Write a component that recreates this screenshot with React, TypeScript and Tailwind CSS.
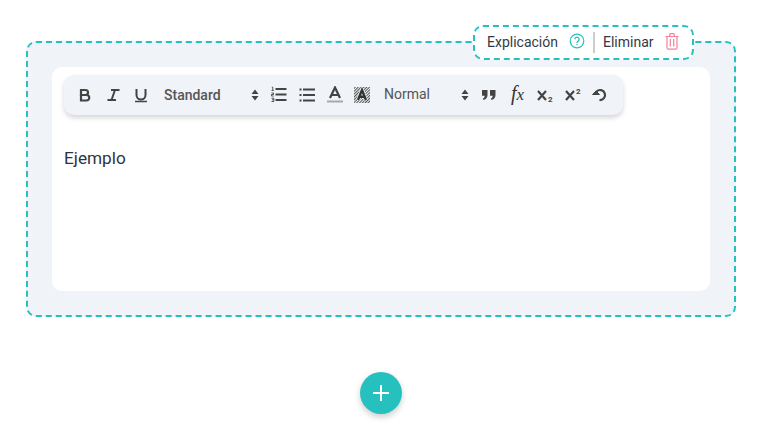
const ink = "#444444";

function Bold() {
  return (
    <svg width="18" height="18" viewBox="0 0 18 18" fill="none" stroke={ink} strokeWidth="2.200" className="shrink-0">
      <path d="M5 4h4.500a2.500 2.500 0 0 1 0 5H5z" />
      <path d="M5 9h5.500a2.750 2.750 0 0 1 0 5.500H5z" />
    </svg>
  );
}

function Italic() {
  return (
    <svg width="18" height="18" viewBox="0 0 18 18" fill="none" stroke={ink} strokeWidth="2" className="shrink-0">
      <path d="M7 4h8.500M3.500 14H12M11 4l-3.500 10" />
    </svg>
  );
}

function Underline() {
  return (
    <svg width="18" height="18" viewBox="0 0 18 18" fill="none" stroke={ink} className="shrink-0">
      <path strokeWidth="2" d="M4.500 3v6a4.500 4.500 0 0 0 9 0V3" />
      <path strokeWidth="1.500" d="M3 15.500h12" />
    </svg>
  );
}

function Chevrons() {
  return (
    <svg width="8" height="12" viewBox="0 0 8 12" fill={ink} className="shrink-0">
      <path d="M4 .5 7.500 5H.5zM4 11.500.5 7h7z" />
    </svg>
  );
}

function OrderedList() {
  return (
    <svg width="18" height="18" viewBox="0 0 18 18" fill="none" stroke={ink} className="shrink-0">
      <path strokeWidth="2" d="M4.500 3h11M4.500 8.500h11M4.500 14h11" />
      <path strokeWidth=".9" d="M.8 1.200h1v3M.5 4.500h2.300M.5 7h2v1.500h-2V10h2.300M.5 12.200h2.300v3.300H.5M1 13.800h1.800" />
    </svg>
  );
}

function BulletList() {
  return (
    <svg width="18" height="18" viewBox="0 0 18 18" fill="none" stroke={ink} strokeWidth="2" className="shrink-0">
      <path d="M4 3.500h12M4 9h12M4 14.500h12" />
      <path d="M.5 3.500h2M.5 9h2M.5 14.500h2" />
    </svg>
  );
}

function TextColor() {
  return (
    <svg width="18" height="18" viewBox="0 0 18 18" fill="none" className="shrink-0">
      <path stroke={ink} strokeWidth="2.200" d="M4 12 9 1.500 14 12M5.800 9h6.400" />
      <rect x="1" y="14.500" width="16" height="2" fill="#a8a8ae" />
    </svg>
  );
}

function Background() {
  return (
    <svg width="18" height="18" viewBox="0 0 18 18" fill="none" className="shrink-0">
      <defs>
        <pattern id="hatch" width="2" height="2" patternUnits="userSpaceOnUse" patternTransform="rotate(45)">
          <rect width="1" height="2" fill="#555555" />
        </pattern>
      </defs>
      <rect x="1" y="1" width="16" height="16" fill="url(#hatch)" />
      <path stroke="#f0f3f8" strokeWidth="4" d="M5 14 9 4l4 10" />
      <path stroke="#333333" strokeWidth="2.400" d="M5 14 9 4l4 10M6.500 10.800h5" />
    </svg>
  );
}

function Quote() {
  return (
    <svg width="16" height="18" viewBox="0 0 16 18" fill={ink} className="shrink-0">
      <path d="M1 4h5.500v5c0 2.500-1.500 4.500-4 5l-.7-1.300C3 12.200 3.700 11.300 3.700 9.800H1z" />
      <path d="M9 4h5.500v5c0 2.500-1.500 4.500-4 5l-.7-1.300c1.200-.5 1.900-1.400 1.900-2.900H9z" />
    </svg>
  );
}

function Formula() {
  return (
    <span className="w-[18px] shrink-0 text-center font-['Liberation_Serif',serif] text-[20px] leading-[18px] text-[#333333] italic">
      f<span className="text-[17px]">x</span>
    </span>
  );
}

function Script({ sup }: { sup?: boolean }) {
  return (
    <svg width="18" height="18" viewBox="0 0 18 18" fill="none" stroke={ink} className="shrink-0">
      <path strokeWidth="2.200" d="M2 5l8 9M10 5l-8 9" />
      <text x="12" y={sup ? 8 : 16} stroke="none" fill={ink} fontSize="8" fontWeight="700" fontFamily="Roboto, sans-serif">2</text>
    </svg>
  );
}

function Clean() {
  return (
    <svg width="18" height="18" viewBox="0 0 18 18" fill="none" stroke={ink} strokeWidth="2.200" className="shrink-0">
      <path d="M5.500 5.500A5 5 0 1 1 8.500 14" />
      <path fill={ink} strokeWidth="1" d="M1.500 8.500 5 5l3.500 3.500z" />
    </svg>
  );
}

function Help() {
  return (
    <svg width="16" height="16" viewBox="0 0 16 16" fill="none" stroke="#26c1bf" strokeWidth="1.200" className="shrink-0">
      <circle cx="8" cy="8" r="6.800" />
      <path strokeWidth="1.300" d="M5.900 6.300a2.100 2.100 0 1 1 3.200 1.800C8.300 8.600 8 9 8 9.900" />
      <path d="M8 11v1.200" />
    </svg>
  );
}

function Trash() {
  return (
    <svg width="14" height="17" viewBox="0 0 14 17" fill="none" stroke="#f6809b" strokeWidth="1.200" className="shrink-0">
      <path d="M.5 3.500h13M2 3.500v11.200c0 .9.500 1.500 1.300 1.500h7.400c.8 0 1.300-.6 1.300-1.500V3.500M4.800 3.500V1.200c0-.4.2-.6.600-.6h3.200c.4 0 .6.200.6.600v2.300M5.300 6v7.500M8.700 6v7.500" />
    </svg>
  );
}

export default function App() {
  return (
    <main className="h-[444px] w-[757px] overflow-hidden bg-white pt-[41px] pl-[26px] font-['Roboto',sans-serif]">
      <div className="relative h-[276px] w-[710px] rounded-[10px] border-2 border-dashed border-[#26c1bf] bg-[#f0f3f8] p-6">
        <div className="absolute top-[-18px] right-[40px] flex h-[35px] w-[221px] items-center rounded-[10px] border-2 border-dashed border-[#26c1bf] bg-white pl-[12px] text-sm text-[#333a45]">
          <span className="-mt-0.5">Explicación</span>
          <span className="ml-[11px] -mt-[3px]"><Help /></span>
          <span className="mx-[8px] -mt-px h-[21px] w-0.5 bg-[#cccccc]" />
          <span className="-mt-0.5">Eliminar</span>
          <span className="ml-[11px] -mt-[3px]"><Trash /></span>
        </div>

        <div className="h-[224px] w-[658px] rounded-[10px] bg-white px-3 pt-2">
          <div className="flex h-10 w-[559px] items-center rounded-[10px] bg-[#f0f3f8] pl-3 shadow-[0_3px_5px_rgba(0,0,0,0.16)]">
            <Bold />
            <span className="ml-[10px]"><Italic /></span>
            <span className="ml-[10px]"><Underline /></span>
            <span className="ml-[14px] w-[87px] text-sm font-medium text-[#555555]">Standard</span>
            <Chevrons />
            <span className="ml-[12px]"><OrderedList /></span>
            <span className="ml-[10px]"><BulletList /></span>
            <span className="ml-[9px]"><TextColor /></span>
            <span className="ml-[9px]"><Background /></span>
            <span className="ml-[13px] -mt-0.5 w-[77px] text-sm text-[#555555]">Normal</span>
            <Chevrons />
            <span className="ml-[12px]"><Quote /></span>
            <span className="ml-[14px]"><Formula /></span>
            <span className="ml-[12px]"><Script /></span>
            <span className="ml-[10px]"><Script sup /></span>
            <span className="ml-[9px]"><Clean /></span>
          </div>
          <p className="mt-[32px] text-[17.2px] leading-[22px] text-[#2d3542]">Ejemplo</p>
        </div>
      </div>

      <div className="mt-[55px] ml-[334px] flex h-[42px] w-[42px] items-center justify-center rounded-full bg-[#26c1bf] shadow-[0_3px_6px_rgba(0,0,0,0.2)]">
        <svg width="16" height="16" viewBox="0 0 16 16" stroke="#ffffff" strokeWidth="2">
          <path d="M8 0v16M0 8h16" />
        </svg>
      </div>
    </main>
  );
}
